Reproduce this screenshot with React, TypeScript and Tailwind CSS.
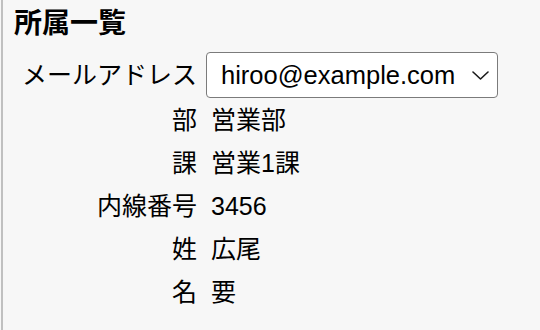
import React from "react";

const rows = [
  { label: "部", value: "営業部" },
  { label: "課", value: "営業1課" },
  { label: "内線番号", value: "3456" },
  { label: "姓", value: "広尾" },
  { label: "名", value: "要" },
];

export default function App() {
  return (
    <div
      className="w-[540px] h-[330px] bg-[#f7f7f7] text-black overflow-hidden"
      style={{ fontFamily: '"Liberation Sans", "Noto Sans CJK JP", sans-serif' }}
    >
      <div className="ml-px h-full border-l-2 border-[#c0c0c0]">
        {/* Title */}
        <h2 className="pl-[11px] pt-[10px] text-[28px] leading-[28px] font-bold">所属一覧</h2>

        {/* Detail table */}
        <div className="mt-[14px] pl-[19px] grid grid-cols-[auto_1fr] gap-x-[9px] items-center text-[25px]">
          <div className="text-right leading-[46px]">メールアドレス</div>
          <div className="relative w-[292px]">
            <select
              defaultValue="hiroo@example.com"
              className="appearance-none w-[292px] h-[46px] pl-[14px] pr-[36px] bg-white border border-[#7b7b7b] rounded-[4px] text-[25.5px] text-black outline-none"
              style={{ fontFamily: '"Liberation Sans", sans-serif' }}
            >
              <option>hiroo@example.com</option>
            </select>
            <svg
              className="absolute right-[9px] top-[19px] pointer-events-none"
              width="17"
              height="9"
              viewBox="0 0 17 9"
              fill="none"
            >
              <path d="M1 1L8.5 8L16 1" stroke="#1a1a1a" strokeWidth="1.6" strokeLinecap="round" strokeLinejoin="round" />
            </svg>
          </div>

          {rows.map((r, i) => (
            <React.Fragment key={r.label}>
              <div className={`text-right leading-[43px] ${i === 0 ? "mt-px" : ""}`}>{r.label}</div>
              <div className={`pl-[5px] leading-[43px] ${i === 0 ? "mt-px" : ""}`}>{r.value}</div>
            </React.Fragment>
          ))}
        </div>
      </div>
    </div>
  );
}
